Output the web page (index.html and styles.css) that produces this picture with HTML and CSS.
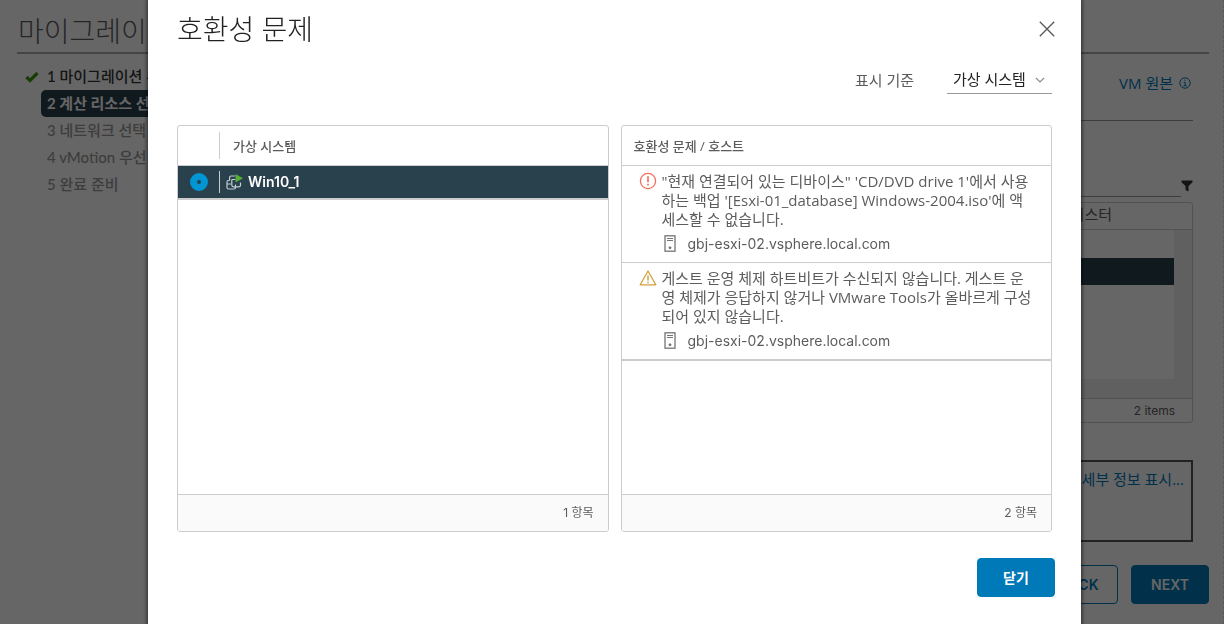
FILE: index.html
```html
<!DOCTYPE html>
<html lang="ko">
<head>
<meta charset="utf-8">
<title>호환성 문제</title>
<link rel="stylesheet" href="styles.css">
</head>
<body>
<div class="wizard" aria-hidden="true">
  <h1 class="wizard-title">마이그레이션</h1>
  <div class="wizard-body">
    <ol class="steps">
      <li class="step step-done">
        <svg class="step-check" viewBox="0 0 14 12" width="14" height="12"><path d="M1.5 6 5 9.5 12.5 2" fill="none" stroke="#3c9a12" stroke-width="3.2"/></svg>
        <span class="step-label">1 마이그레이션 유형</span>
      </li>
      <li class="step step-current"><span class="step-label">2 계산 리소스 선택</span></li>
      <li class="step"><span class="step-label">3 네트워크 선택</span></li>
      <li class="step"><span class="step-label">4 vMotion 우선</span></li>
      <li class="step"><span class="step-label">5 완료 준비</span></li>
    </ol>
    <div class="content">
      <div class="origin">
        <a class="link" href="#">VM 원본
          <svg viewBox="0 0 12 12" width="12" height="12" fill="none" stroke="currentColor"><circle cx="6" cy="6" r="5.2"/><path d="M4.7 5.3h1.5v3.2M4.4 8.7h3.4M5.5 3.2h1.2"/></svg>
        </a>
      </div>
      <div class="search">
        <div class="search-line"></div>
        <svg viewBox="0 0 12 12" width="12" height="12"><path d="M.5.5h11v1.8L7.5 6v5.5l-3-1.5V6L.5 2.300z" fill="#333"/></svg>
      </div>
      <div class="hosts">
        <div class="hosts-head">클러스터</div>
        <div class="hosts-scroll"><div class="hosts-rows"><div class="hosts-selected"></div></div></div>
        <div class="hosts-foot">2 items</div>
      </div>
      <div class="compat"><a class="link" href="#">세부 정보 표시...</a></div>
    </div>
  </div>
  <div class="wizard-actions">
    <button class="btn btn-outline" type="button" tabindex="-1">BACK</button>
    <button class="btn btn-primary" type="button" tabindex="-1">NEXT</button>
  </div>
</div>

<div class="overlay">
  <section class="modal" role="dialog" aria-modal="true" aria-labelledby="dialog-title">
    <header class="modal-head">
      <h2 class="modal-title" id="dialog-title">호환성 문제</h2>
      <button class="close" type="button" aria-label="닫기">
        <svg viewBox="0 0 16 16" width="16" height="16"><path d="M.8.8l14.400 14.400M15.200.8.8 15.200" stroke="#565656" stroke-width="1.300"/></svg>
      </button>
    </header>
    <div class="view-by">
      <label for="view-by">표시 기준</label>
      <span class="select">
        <select id="view-by"><option>가상 시스템</option></select>
        <svg viewBox="0 0 10 6" width="10" height="6"><path d="M.8.8 5 5 9.200.8" fill="none" stroke="#888" stroke-width="1.200"/></svg>
      </span>
    </div>
    <div class="panels">
      <div class="panel">
        <table class="grid">
          <thead><tr><th class="pick"></th><th class="name">가상 시스템</th></tr></thead>
          <tbody>
            <tr class="selected">
              <td class="pick"><input class="radio" type="radio" id="vm" name="vm" checked></td>
              <td class="name"><label class="vm" for="vm">
                <svg viewBox="0 0 17 16" width="17" height="16" fill="none" stroke="#c4ced3" stroke-width="1.200"><path d="M3.600 6.500V3.500Q3.600 2 5 2H9M3.600 6.500H2.500Q1 6.500 1 8v5.500q0 1.500 1.500 1.500h5.500q1.500 0 1.500-1.500V10.500M1 10h4M5.800 5.500v5.500q0 1.800 1.700 1.800H13q1.500 0 1.500-1.500V8.500M5.800 5.500h3.600"/><path d="M9.500 0v8.500L17 4.300z" fill="#55b034" stroke="none"/></svg>
                <span>Win10_1</span></label></td>
            </tr>
          </tbody>
        </table>
        <div class="panel-foot">1 항목</div>
      </div>
      <div class="panel">
        <table class="grid">
          <thead><tr><th class="issue-head">호환성 문제 / 호스트</th></tr></thead>
          <tbody>
            <tr><td class="issue">
              <div class="issue-line">
                <svg viewBox="0 0 18 18" width="18" height="18" fill="none" stroke="#f4705c" stroke-width="1.300"><circle cx="9" cy="9" r="7.600"/><path d="M9 4.300v6M9 11.800v1.800" stroke-width="1.700"/></svg>
                <p>"현재 연결되어 있는 디바이스" 'CD/DVD drive 1'에서 사용<br>하는 백업 '[Esxi-01_database] Windows-2004.iso'에 액<br>세스할 수 없습니다.</p>
              </div>
              <div class="host">
                <svg viewBox="0 0 12 17" width="12" height="17" fill="none" stroke="#747474"><rect x="1" y=".8" width="10" height="15.400" stroke-width="1.300"/><path d="M3 3.500h6M3 5.500h6" /><circle cx="6" cy="12.800" r="1" fill="#747474"/></svg>
                <span>gbj-esxi-02.vsphere.local.com</span>
              </div>
            </td></tr>
            <tr><td class="issue">
              <div class="issue-line">
                <svg viewBox="0 0 18 18" width="18" height="18" fill="none" stroke="#d0a13c" stroke-width="1.300" stroke-linejoin="round"><path d="M9 2 16.800 15.800H1.200z"/><path d="M9 6.500v5M9 12.800v1.400" stroke-width="1.500"/></svg>
                <p>게스트 운영 체제 하트비트가 수신되지 않습니다. 게스트 운<br>영 체제가 응답하지 않거나 VMware Tools가 올바르게 구성<br>되어 있지 않습니다.</p>
              </div>
              <div class="host">
                <svg viewBox="0 0 12 17" width="12" height="17" fill="none" stroke="#747474"><rect x="1" y=".8" width="10" height="15.400" stroke-width="1.300"/><path d="M3 3.500h6M3 5.500h6" /><circle cx="6" cy="12.800" r="1" fill="#747474"/></svg>
                <span>gbj-esxi-02.vsphere.local.com</span>
              </div>
            </td></tr>
          </tbody>
        </table>
        <div class="panel-foot">2 항목</div>
      </div>
    </div>
    <footer class="modal-foot"><button class="btn btn-primary" type="button">닫기</button></footer>
  </section>
</div>
</body>
</html>
```

FILE: styles.css
```css
* { box-sizing: border-box; }

body {
  margin: 0;
  color: #5c5c5c;
  background: #fff;
  font: 400 15px/20px "Open Sans", "Noto Sans CJK KR", sans-serif;
  overflow: hidden;
}

h1, h2, p, ol { margin: 0; padding: 0; }
svg { display: block; flex: none; }
button, select { font: inherit; }

.btn {
  min-width: 78px;
  height: 39px;
  padding: 0 16px;
  border: 1px solid #0079b8;
  border-radius: 4px;
  font: 600 14px/20px Inter, "Noto Sans CJK KR", sans-serif;
}
.btn-primary { color: #fff; background: #0079b8; }
.btn-outline { color: #0079b8; background: transparent; }

.link {
  display: inline-flex;
  align-items: center;
  gap: 6px;
  color: #0079b8;
  text-decoration: none;
}

/* Wizard behind the dialog */
.wizard {
  min-height: 100vh;
  padding: 9px 14px 20px 17px;
  border-right: 1px dashed #ddd;
}
.wizard-title {
  height: 45px;
  padding: 2px 0 0 1px;
  border-bottom: 2px solid #aaa;
  font-size: 28px;
  font-weight: 300;
  line-height: 40px;
}
.wizard-body { display: flex; gap: 16px; }
.steps {
  flex: none;
  width: 190px;
  padding: 9px 0 0 8px;
  list-style: none;
}
.step {
  display: flex;
  align-items: center;
  height: 27px;
  padding-left: 16px;
  color: #9a9a9a;
  font: 500 15px/27px Lato, "Noto Sans CJK KR", sans-serif;
}
.step-label {
  flex: 1;
  padding-left: 6px;
  white-space: nowrap;
}
.step-done { padding-left: 0; color: #333; }
.step-check { margin-right: 2px; }
.step-current { color: #fff; font-weight: 700; }
.step-current .step-label { border-radius: 5px; background: #29404d; }

.content { flex: 1; padding-right: 16px; }
.origin {
  display: flex;
  justify-content: flex-end;
  height: 67px;
  padding: 19px 2px 0 0;
  border-bottom: 1px solid #999;
}
.origin .link { align-self: flex-start; }
.search {
  display: flex;
  align-items: center;
  height: 76px;
  padding-top: 53px;
}
.search-line { flex: 1; height: 23px; border-bottom: 1px solid #999; }
.hosts {
  margin-top: 5px;
  border: 1px solid #ccc;
  border-radius: 3px;
}
.hosts-head {
  height: 27px;
  padding: 1px 80px 0 0;
  border-bottom: 1px solid #ccc;
  text-align: right;
}
.hosts-scroll {
  padding: 0 18px 19px 0;
  background: #f0f0f0;
}
.hosts-rows { height: 149px; padding-top: 28px; background: #fff; }
.hosts-selected { height: 27px; background: #29404d; }
.hosts-foot {
  height: 24px;
  padding-right: 17px;
  border-top: 1px solid #ccc;
  font: 400 12px/23px Inter, "Noto Sans CJK KR", sans-serif;
  text-align: right;
}
.compat {
  display: flex;
  justify-content: flex-end;
  height: 82px;
  margin-top: 37px;
  padding: 7px;
  border: 2px solid #555;
}
.compat .link { align-self: flex-start; }
.wizard-actions {
  display: flex;
  justify-content: flex-end;
  gap: 13px;
  margin-top: 23px;
}

/* Dialog */
.overlay {
  position: fixed;
  inset: 0;
  display: flex;
  padding: 0 143px 0 148px;
  background: rgba(0, 0, 0, .6);
}
.modal {
  flex: 1;
  padding: 8px 29px 24px;
  background: #fff;
  box-shadow: 0 1px 3px 2px rgba(0, 0, 0, .4);
}
.modal-head {
  display: flex;
  align-items: center;
  justify-content: space-between;
  height: 41px;
}
.modal-title {
  color: #222;
  font-size: 28px;
  font-weight: 300;
  line-height: 40px;
}
.close {
  width: 24px;
  height: 24px;
  margin-right: -7px;
  padding: 4px;
  border: 0;
  background: none;
}

.view-by {
  display: flex;
  align-items: center;
  justify-content: flex-end;
  gap: 33px;
  height: 29px;
  margin: 16px 0 31px;
}
.select { display: grid; align-items: center; width: 105px; }
.select select, .select svg { grid-area: 1 / 1; }
.select select {
  width: 100%;
  height: 29px;
  padding: 0 20px 0 6px;
  border: 0;
  border-bottom: 1px solid #999;
  border-radius: 0;
  color: #222;
  background: none;
  appearance: none;
}
.select svg { justify-self: end; margin-right: 7px; pointer-events: none; }

.panels { display: grid; grid-template-columns: 1fr 1fr; gap: 12px; }
.panel {
  display: flex;
  flex-direction: column;
  min-height: 407px;
  border: 1px solid #ccc;
  border-radius: 3px;
  overflow: hidden;
}
.grid { width: 100%; border-collapse: separate; border-spacing: 0; table-layout: fixed; }
.grid th {
  height: 40px;
  padding: 0;
  border-bottom: 1px solid #ccc;
  font-size: 13px;
  font-weight: 500;
  text-align: left;
}
.grid td { padding: 0; border-bottom: 1px solid #ccc; }
.grid tbody tr:last-child td { border-bottom: 2px solid #ccc; }
.grid .pick {
  width: 42px;
  background: linear-gradient(#ccc, #ccc) right center / 1px 70% no-repeat;
}
.grid th.name { padding-left: 13px; }
.grid th.issue-head { padding-left: 12px; }
.selected { height: 34px; color: #fff; background: #29404d; }
.radio {
  display: block;
  width: 18px;
  height: 18px;
  margin: 0 auto;
  border: 7px solid #0095d3;
  border-radius: 50%;
  background: #29404d;
  appearance: none;
}
.vm {
  display: flex;
  align-items: center;
  gap: 5px;
  padding-left: 6px;
  font: 600 14px/20px Inter, sans-serif;
}
.panel .issue { padding: 6px 12px 6px 17px; }
.issue-line { display: flex; gap: 5px; }
.issue-line p { line-height: 19px; white-space: nowrap; }
.host {
  display: flex;
  align-items: center;
  gap: 12px;
  height: 25px;
  margin: 2px 0 0 25px;
  font: 400 14px/20px Inter, sans-serif;
}
.panel-foot {
  height: 37px;
  margin-top: auto;
  padding-right: 14px;
  border-top: 1px solid #ccc;
  background: #fafafa;
  font: 400 12px/35px Inter, "Noto Sans CJK KR", sans-serif;
  text-align: right;
}
.modal-foot {
  display: flex;
  justify-content: flex-end;
  margin: 26px -3px 0 0;
}
```
